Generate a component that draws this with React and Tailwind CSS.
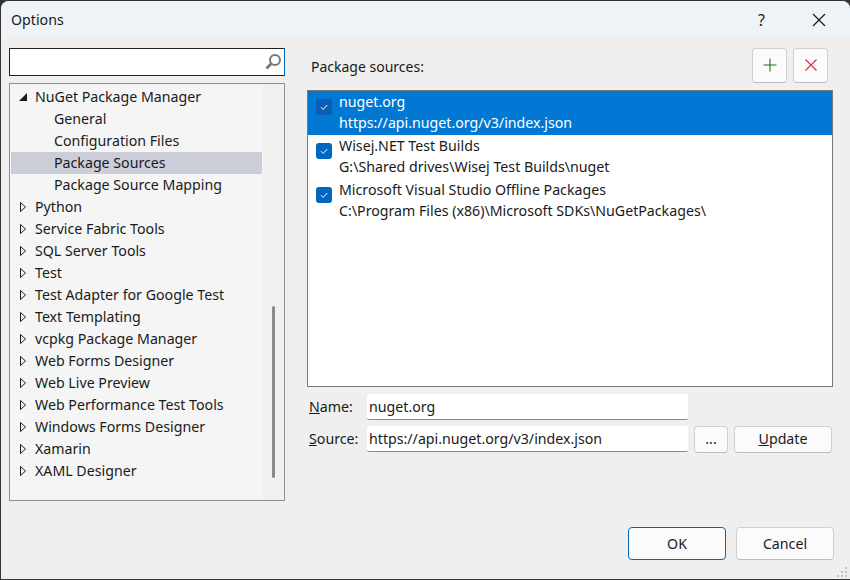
import React from "react";

const treeItems = [
  { label: "NuGet Package Manager", open: true },
  { label: "General", child: true },
  { label: "Configuration Files", child: true },
  { label: "Package Sources", child: true, selected: true },
  { label: "Package Source Mapping", child: true },
  { label: "Python" },
  { label: "Service Fabric Tools" },
  { label: "SQL Server Tools" },
  { label: "Test" },
  { label: "Test Adapter for Google Test" },
  { label: "Text Templating" },
  { label: "vcpkg Package Manager" },
  { label: "Web Forms Designer" },
  { label: "Web Live Preview" },
  { label: "Web Performance Test Tools" },
  { label: "Windows Forms Designer" },
  { label: "Xamarin" },
  { label: "XAML Designer" },
];

const sources = [
  { name: "nuget.org", url: "https://api.nuget.org/v3/index.json", selected: true },
  { name: "Wisej.NET Test Builds", url: "G:\\Shared drives\\Wisej Test Builds\\nuget" },
  { name: "Microsoft Visual Studio Offline Packages", url: "C:\\Program Files (x86)\\Microsoft SDKs\\NuGetPackages\\" },
];

const Arrow = ({ open }) =>
  open ? (
    <svg width="10" height="10" viewBox="0 0 10 10" className="shrink-0">
      <path d="M9 1V9H1Z" fill="#1a1a1a" />
    </svg>
  ) : (
    <svg width="10" height="12" viewBox="0 0 10 12" className="shrink-0">
      <path d="M2.5 1.5V10.5L7.5 6Z" fill="none" stroke="#1a1a1a" strokeWidth="1" />
    </svg>
  );

const TreeRow = ({ item }) => (
  <div className={"flex items-center h-[22px] " + (item.selected ? "bg-[#cbcdd9]" : "")}>
    {item.child ? (
      <span className="ml-[43px]">{item.label}</span>
    ) : (
      <>
        <span className="w-[24px] pl-[7px] flex items-center">
          <Arrow open={item.open} />
        </span>
        <span>{item.label}</span>
      </>
    )}
  </div>
);

const Check = ({ selected }) => (
  <span className={"w-4 h-4 rounded-[3px] flex items-center justify-center shrink-0 " + (selected ? "bg-[#0a5fb4]" : "bg-[#0067c0]")}>
    <svg width="10" height="10" viewBox="0 0 10 10">
      <path d="M2 5.2L4.2 7.4L8.2 3" fill="none" stroke="#fff" strokeWidth="1" />
    </svg>
  </span>
);

const SourceRow = ({ source }) => (
  <div className={"flex items-start h-[44px] " + (source.selected ? "bg-[#0078d4] text-white" : "")}>
    <span className="ml-[8px] mr-[7px] mt-[8px] flex"><Check selected={source.selected} /></span>
    <div className="leading-[22px]">
      <div>{source.name}</div>
      <div className="mt-[-1px]">{source.url}</div>
    </div>
  </div>
);

const Btn = ({ className, children }) => (
  <button className={"flex items-center justify-center rounded-[4px] bg-[#fbfbfb] border border-[#d0d0d0] border-b-[#bcbcbc] " + className}>
    {children}
  </button>
);

export default function App() {
  return (
    <div className="w-[850px] h-[580px] bg-[#333333] overflow-hidden text-[14.2px] text-[#1a1a1a] pt-px pb-px pl-px">
      <div className="font-['Noto_Sans',sans-serif] h-full flex flex-col rounded-t-[8px] overflow-hidden bg-[#efefef] relative">
        {/* Title bar */}
        <div className="h-[37px] bg-[#eef3f8] flex items-center shrink-0">
          <span className="ml-[10px] flex-1">Options</span>
          <span className="mr-[47px] text-[16px]">?</span>
          <svg width="14" height="14" viewBox="0 0 14 14" className="mr-[24px]">
            <path d="M1 1L13 13M13 1L1 13" stroke="#1a1a1a" strokeWidth="1.2" />
          </svg>
        </div>

        <div className="flex flex-1 min-h-0">
          {/* Left column */}
          <div className="ml-[8px] w-[276px] mt-[10px] shrink-0">
            <div className="h-[28px] bg-white border border-[#1f1f1f] border-r-[#0067c0] flex items-center justify-end pr-[2px]">
              <svg width="18" height="18" viewBox="0 0 18 18">
                <circle cx="11" cy="7" r="5" fill="none" stroke="#777" strokeWidth="2" />
                <path d="M7.4 10.6L2.5 15.5" stroke="#777" strokeWidth="2.8" />
              </svg>
            </div>
            <div className="mt-[7px] h-[418px] border border-[#8b8f96] bg-[#f5f5f5] flex">
              <div className="w-[251px] ml-px pt-[2px]">
                {treeItems.map((item) => (
                  <TreeRow key={item.label} item={item} />
                ))}
              </div>
              <div className="flex-1 bg-[#f0f0f0] ml-px flex justify-center">
                <div className="w-[3px] h-[172px] mt-[222px] bg-[#8a8a8a] rounded-full"></div>
              </div>
            </div>
          </div>

          {/* Right column */}
          <div className="ml-[22px] w-[526px] shrink-0">
            <div className="h-[52px] flex items-center justify-between pt-[4px]">
              <span className="ml-[4px] text-[14px]">Package sources:</span>
              <div className="flex gap-[6px] mr-[5px] mt-[-2px]">
                <Btn className="w-[35px] h-[35px]">
                  <svg width="14" height="14" viewBox="0 0 14 14">
                    <path d="M7 0.5V13.5M0.5 7H13.5" stroke="#107c10" strokeWidth="1.1" />
                  </svg>
                </Btn>
                <Btn className="w-[35px] h-[35px]">
                  <svg width="14" height="14" viewBox="0 0 14 14">
                    <path d="M1.5 1.5L12.5 12.5M12.5 1.5L1.5 12.5" stroke="#d1344a" strokeWidth="1.1" />
                  </svg>
                </Btn>
              </div>
            </div>
            <div className="h-[297px] border border-[#7a7a7a] bg-white overflow-hidden">
              {sources.map((s) => (
                <SourceRow key={s.name} source={s} />
              ))}
            </div>

            <div className="flex items-center mt-[7px] h-[26px]">
              <span className="w-[59px] ml-px pl-px"><u>N</u>ame:</span>
              <div className="w-[321px] h-[26px] bg-white border-b border-[#8a8a8a] rounded-[2px] flex items-center pl-[2px]">nuget.org</div>
            </div>
            <div className="flex items-center mt-[6px] h-[26px]">
              <span className="w-[59px] ml-px pl-px"><u>S</u>ource:</span>
              <div className="w-[321px] h-[26px] bg-white border-b border-[#8a8a8a] rounded-[2px] flex items-center pl-[2px]">https://api.nuget.org/v3/index.json</div>
              <Btn className="w-[34px] h-[27px] ml-[6px]">...</Btn>
              <Btn className="w-[98px] h-[27px] ml-[6px]"><span><u>U</u>pdate</span></Btn>
            </div>
          </div>
        </div>

        {/* Footer buttons */}
        <div className="absolute right-[16px] bottom-[19px] flex gap-[10px]">
          <Btn className="w-[98px] h-[33px] !border-[#0067c0]">OK</Btn>
          <Btn className="w-[98px] h-[33px]">Cancel</Btn>
        </div>

        {/* Size grip */}
        <svg width="12" height="12" viewBox="0 0 12 12" className="absolute right-[1px] bottom-[1px]">
          <path d="M8 1h2v2H8zM4 5h2v2H4zM8 5h2v2H8zM0 9h2v2H0zM4 9h2v2H4zM8 9h2v2H8z" fill="#c4c4c4" />
        </svg>
      </div>
    </div>
  );
}
